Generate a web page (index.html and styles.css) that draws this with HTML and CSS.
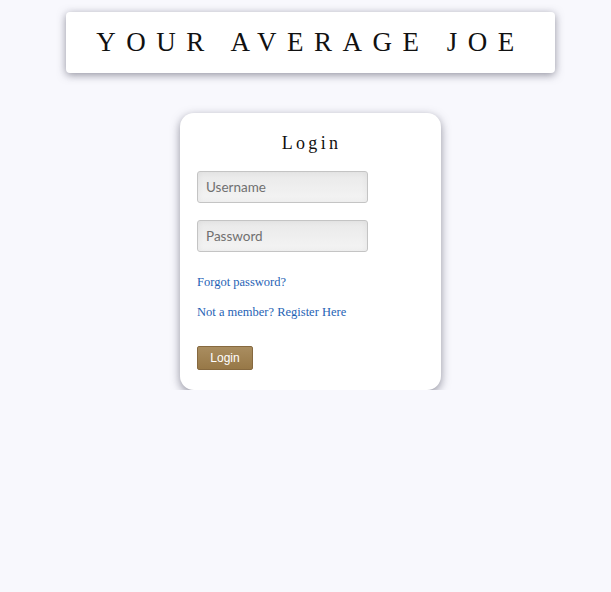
FILE: index.html
```html
<!DOCTYPE html>
<html lang="en">
<head>
  <meta charset="UTF-8" />
  <title>Your Average Joe - Login</title>
  <link rel="stylesheet" href="styles.css">
</head>
<body>

<header class="banner">
  <h1>YOUR AVERAGE JOE</h1>
</header>

<main class="login-card">
  <h2>Login</h2>
  <form class="login-form">
    <input type="text" placeholder="Username" />
    <input type="password" placeholder="Password" />
    <a href="#">Forgot password?</a>
    <a href="#">Not a member? Register Here</a>
    <button type="submit">Login</button>
  </form>
</main>

</body>
</html>
```

FILE: styles.css
```css
* {
  box-sizing: border-box;
}

body {
  margin: 0;
  padding: 12px 0 0 10px;
  background-color: #f8f8fd;
  font-family: 'Liberation Serif', 'Times New Roman', serif;
  color: #111;
}

.banner {
  width: 489px;
  height: 61px;
  margin: 0 auto;
  background-color: #fff;
  border-radius: 4px;
  box-shadow: 0 2px 8px rgba(60, 60, 80, 0.55);
  display: flex;
  align-items: center;
  justify-content: center;
}

.banner h1 {
  margin: 0;
  font-size: 27px;
  font-weight: normal;
  letter-spacing: 10.5px;
}

.login-card {
  width: 261px;
  margin: 40px auto 0;
  background-color: #fff;
  border-radius: 14px;
  box-shadow: 0 3px 10px rgba(60, 60, 80, 0.55);
  padding: 20px 17px 20px;
}

.login-card h2 {
  margin: 0 0 17px;
  text-align: center;
  font-size: 18px;
  font-weight: normal;
  letter-spacing: 3.3px;
  padding-left: 2px;
}

.login-form {
  display: flex;
  flex-direction: column;
  align-items: flex-start;
}

.login-form input {
  width: 171px;
  height: 32px;
  margin-bottom: 17px;
  padding: 0 8px;
  border: 1px solid #c4c4c4;
  border-radius: 3px;
  background: linear-gradient(#e9e9e9, #f4f4f4);
  box-shadow: inset 0 0 6px rgba(0, 0, 0, 0.06);
  font-family: Lato, 'Open Sans', sans-serif;
  font-size: 13.5px;
  color: #333;
}

.login-form input::placeholder {
  color: #707070;
}

.login-form a {
  color: #1f63b5;
  text-decoration: none;
  font-size: 12.5px;
  line-height: 15px;
  margin-bottom: 15px;
}

.login-form a:first-of-type {
  margin-top: 6px;
}

.login-form button {
  margin-top: 11px;
  width: 56px;
  height: 24px;
  border: 1px solid #86693f;
  border-radius: 2px;
  background: linear-gradient(#a98d60, #977847);
  color: #fff;
  font-family: 'Liberation Sans', Arial, sans-serif;
  font-size: 12px;
  cursor: pointer;
}
```
